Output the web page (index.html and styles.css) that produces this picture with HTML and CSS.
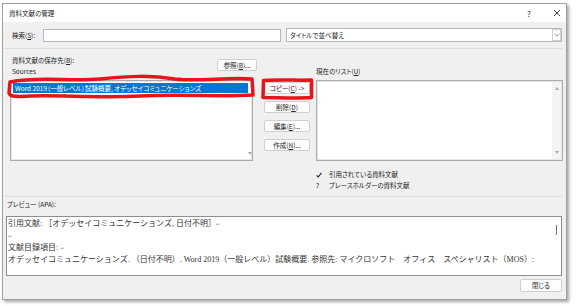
FILE: index.html
```html
<!DOCTYPE html>
<html lang="ja">
<head>
    <meta charset="UTF-8">
    <title>資料文献の管理</title>
    <link rel="stylesheet" href="styles.css">
</head>
<body>

    <div class="dialog">
        <div class="titlebar">
            <span class="title">資料文献の管理</span>
            <span class="help">?</span>
            <span class="close">
                <svg width="8" height="8" viewBox="0 0 8 8"><path d="M1 1 L7 7 M7 1 L1 7" stroke="#333" stroke-width="0.9"/></svg>
            </span>
        </div>

        <div class="search-row">
            <label class="search-label">検索(<u>S</u>):</label>
            <div class="textbox"></div>
            <div class="combo">
                <span>タイトルで並べ替え</span>
                <span class="combo-arrow">
                    <svg width="6" height="4" viewBox="0 0 6 4"><path d="M0.5 0.8 L3 3.2 L5.5 0.8" fill="none" stroke="#777" stroke-width="0.8"/></svg>
                </span>
            </div>
        </div>

        <div class="sep"></div>

        <div class="lists">
            <div class="col-left">
                <div class="left-head">
                    <div class="labels">
                        <div>資料文献の保存先(<u>B</u>):</div>
                        <div>Sources</div>
                    </div>
                    <button class="btn browse">参照(<u>B</u>)...</button>
                </div>
                <div class="listbox">
                    <div class="items">
                        <div class="item selected">Word 2019（一般レベル）試験概要, オデッセイコミュニケーションズ</div>
                    </div>
                    <div class="scroll">
                        <span></span>
                        <span class="down"></span>
                    </div>
                </div>
            </div>

            <div class="col-buttons">
                <button class="btn">コピー(<u>C</u>) -&gt;</button>
                <button class="btn">削除(<u>D</u>)</button>
                <button class="btn">編集(<u>E</u>)...</button>
                <button class="btn">作成(<u>N</u>)...</button>
            </div>

            <div class="col-right">
                <div class="right-label">現在のリスト(<u>U</u>)</div>
                <div class="listbox">
                    <div class="items"></div>
                    <div class="scroll track">
                        <span class="up"></span>
                        <span class="down"></span>
                    </div>
                </div>
            </div>
        </div>

        <div class="legend">
            <div class="legend-row">
                <span class="mark">
                    <svg width="6" height="6" viewBox="0 0 6 6"><path d="M0.6 3.4 L2.2 5 L5.4 0.8" fill="none" stroke="#222" stroke-width="1.1"/></svg>
                </span>
                引用されている資料文献
            </div>
            <div class="legend-row"><span class="mark">?</span>プレースホルダーの資料文献</div>
        </div>

        <div class="sep sep-low"></div>

        <div class="preview-label">プレビュー (APA):</div>
        <div class="preview">
            <div class="line">引用文献: ［オデッセイコミュニケーションズ, 日付不明］<span class="pm">↵</span></div>
            <div class="line"><span class="pm">↵</span></div>
            <div class="line">文献目録項目: <span class="pm">↵</span></div>
            <div class="line">オデッセイコミュニケーションズ. （日付不明）. Word 2019（一般レベル）試験概要. 参照先: マイクロソフト　オフィス　スペシャリスト（MOS）:</div>
            <div class="thumb"></div>
        </div>

        <div class="footer">
            <button class="btn close-btn">閉じる</button>
        </div>
    </div>

    <!-- 赤ペンの囲み -->
    <svg class="marks" width="577" height="306" viewBox="0 0 577 306">
        <path d="M10,82 C40,76 70,82 100,79 C130,76 150,75 175,79 C200,82 225,77 252,79 L253,95 C220,97 180,94 140,96 C100,98 60,95 30,96 C18,97 10,97 9,93 Z"/>
        <path d="M263.5,80.5 C280,79.5 298,80.5 311.5,80 L311.5,97.5 C295,98.5 278,97.5 263,97.5 Z"/>
    </svg>

</body>
</html>
```

FILE: styles.css
```css
* { box-sizing: border-box; }
body { margin: 0; padding: 3px 0 0 2px; background: #fff; font-family: "Noto Sans CJK JP", sans-serif; font-size: 6.5px; color: #222; font-feature-settings: "palt"; position: relative; width: 577px; height: 306px; overflow: hidden; }
u { text-decoration-thickness: 0.5px; text-underline-offset: 1px; }

.dialog { width: 565px; height: 297px; border: 1px solid #a0a0a0; background: #f0f0f0; box-shadow: 2px 2px 3px rgba(0,0,0,0.35); }

.titlebar { height: 18px; background: #fff; display: flex; align-items: center; padding-left: 6px; }
.title { flex: 1; }
.help { width: 26px; font-size: 8px; color: #333; }
.close { width: 13px; display: flex; align-items: center; }

.search-row { display: flex; align-items: center; margin-top: 6px; padding-left: 9px; }
.search-label { width: 31px; }
.textbox { width: 238px; height: 13px; background: #fff; border: 1px solid #b8b8b8; }
.combo { width: 276px; height: 14px; margin-left: 5px; background: #fff; border: 1px solid #b8b8b8; display: flex; align-items: center; justify-content: space-between; padding-left: 3px; }
.combo-arrow { width: 9px; height: 12px; border: 1px solid #d0d0d0; display: flex; align-items: center; justify-content: center; }

.sep { height: 1px; background: #dcdcdc; margin: 6px 4px 0 2px; }
.sep-low { margin-top: 5px; }

.lists { display: flex; margin-top: 6px; padding-left: 7px; }
.col-left { width: 247px; }
.left-head { display: flex; justify-content: space-between; align-items: flex-start; padding-left: 2px; }
.labels { line-height: 11px; }
.btn { font: inherit; font-size: 6.5px; color: #222; background: #fdfdfd; border: 1px solid #cfcfcf; border-radius: 2px; padding: 0; height: 12px; line-height: 10px; text-align: center; white-space: nowrap; }
.browse { width: 40px; margin-top: 4px; }

.listbox { display: flex; height: 81px; margin-top: 3px; background: #fff; border: 1px solid #ababab; box-shadow: inset 0 0 0 1px #e6e6e6; }
.col-left .listbox { width: 243px; }
.items { flex: 1; padding: 2px 0 0 2px; }
.item { height: 10px; line-height: 10px; padding-left: 2px; white-space: nowrap; overflow: hidden; }
.item.selected { width: 235px; background: #0078d7; color: #fff; }
.scroll { width: 9px; display: flex; flex-direction: column; justify-content: space-between; align-items: center; padding: 5px 0 5px; }
.scroll.track { background: #f4f4f4; margin: 1px 1px 1px 0; }
.up, .down { width: 0; height: 0; border-left: 2.5px solid transparent; border-right: 2.5px solid transparent; }
.up { border-bottom: 3px solid #a8a8a8; }
.down { border-top: 3px solid #a8a8a8; }

.col-buttons { width: 46px; margin-left: 7px; padding-top: 27px; display: flex; flex-direction: column; gap: 7px; }
.col-buttons .btn { width: 46px; }

.col-right { width: 247px; margin-left: 6px; padding-top: 11px; }
.right-label { line-height: 11px; }

.legend { margin-top: 8px; padding-left: 313px; line-height: 11px; }
.legend-row { display: flex; align-items: center; }
.mark { width: 13px; display: flex; align-items: center; }

.preview-label { margin-top: 2px; padding-left: 4px; line-height: 11px; }
.preview { position: relative; width: 556px; height: 60px; margin: 6px 0 0 3px; background: #fff; border: 1px solid #8f8f8f; padding: 1px 0 0 1px; font-family: "Liberation Serif", "Noto Sans CJK JP", serif; font-size: 8px; color: #333; font-feature-settings: normal; overflow: hidden; }
.line { height: 12px; line-height: 12px; white-space: nowrap; }
.pm { color: #999; font-family: "DejaVu Sans", sans-serif; font-size: 5px; }
.thumb { position: absolute; right: 4px; top: 8px; width: 1px; height: 10px; background: #777; }

.footer { display: flex; justify-content: flex-end; padding-right: 4px; margin-top: 3px; }
.close-btn { width: 42px; height: 13px; line-height: 11px; }

.marks { position: absolute; left: 0; top: 0; pointer-events: none; }
.marks path { fill: none; stroke: #e8141b; stroke-width: 3.5; stroke-linejoin: round; }
```
